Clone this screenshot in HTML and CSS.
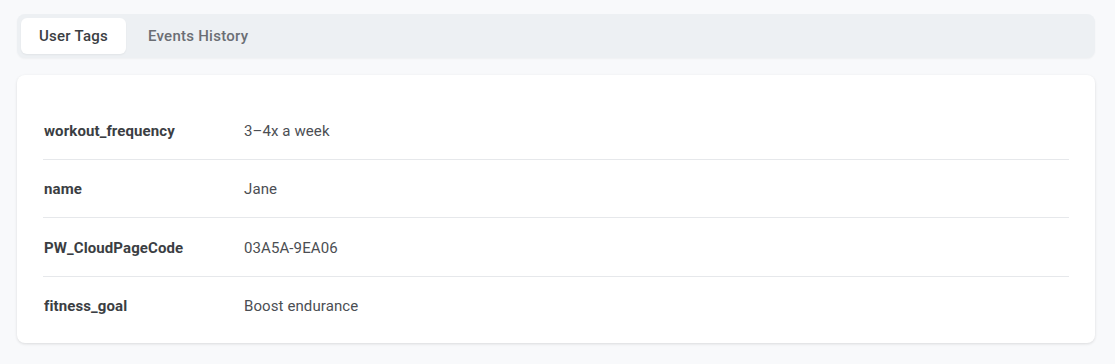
FILE: index.html
```html
<!DOCTYPE html>
<html lang="en">
<head>
    <meta charset="UTF-8">
    <meta name="viewport" content="width=device-width, initial-scale=1.0">
    <title>User Profile</title>
    <link rel="stylesheet" href="styles.css">
</head>
<body>
    <div class="page">
        <div class="tabs">
            <button class="tab active">User Tags</button>
            <button class="tab">Events History</button>
        </div>
        <div class="card">
            <div class="row">
                <div class="key">workout_frequency</div>
                <div class="value">3–4x a week</div>
            </div>
            <div class="row">
                <div class="key">name</div>
                <div class="value">Jane</div>
            </div>
            <div class="row">
                <div class="key">PW_CloudPageCode</div>
                <div class="value">03A5A-9EA06</div>
            </div>
            <div class="row">
                <div class="key">fitness_goal</div>
                <div class="value">Boost endurance</div>
            </div>
        </div>
    </div>
</body>
</html>
```

FILE: styles.css
```css
body {
    margin: 0;
    font-family: Roboto, "Liberation Sans", Arial, sans-serif;
    background-color: #f8f9fb;
    color: #3b3e43;
}

.page {
    padding: 14px 20px 20px 17px;
    display: flex;
    flex-direction: column;
    gap: 17px;
}

.tabs {
    display: flex;
    gap: 4px;
    padding: 4px;
    background-color: #edf0f3;
    border-radius: 8px;
    box-shadow: 0 1px 2px rgba(0, 0, 0, 0.04);
}

.tab {
    font-family: inherit;
    font-size: 15px;
    font-weight: 500;
    letter-spacing: 0.25px;
    height: 36px;
    padding: 0 18px;
    border: none;
    border-radius: 6px;
    background: transparent;
    color: #6b6e74;
    cursor: pointer;
}

.tab.active {
    background-color: #ffffff;
    color: #3b3e43;
    box-shadow: 0 1px 2px rgba(0, 0, 0, 0.05);
}

.card {
    background-color: #ffffff;
    border-radius: 8px;
    box-shadow: 0 1px 3px rgba(0, 0, 0, 0.12);
    padding: 26px 26px 9px 26px;
}

.row {
    display: flex;
    align-items: center;
    box-sizing: border-box;
    height: 58.5px;
    padding-top: 2px;
    border-bottom: 1px solid #e6e8eb;
    font-size: 15px;
}

.row:last-child {
    border-bottom: none;
    height: 57.5px;
}

.key {
    width: 200px;
    font-weight: 700;
    color: #3b3e43;
    padding-left: 1px;
    letter-spacing: 0.1px;
}

.value {
    color: #4b4e53;
    letter-spacing: 0.1px;
}
```
